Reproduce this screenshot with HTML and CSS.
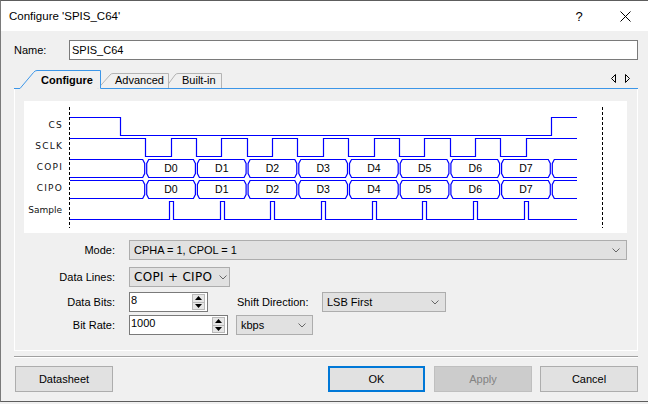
FILE: index.html
```html
<!DOCTYPE html>
<html>
<head>
<meta charset="utf-8">
<link rel="stylesheet" href="styles.css">
</head>
<body>
<div class="window">
  <div class="titlebar">
    <span class="title">Configure 'SPIS_C64'</span>
    <span class="capbtn help">?</span>
    <span class="capbtn close"><svg width="11" height="11" viewBox="0 0 11 11"><path d="M0.5,0.5 L10.5,10.5 M10.5,0.5 L0.5,10.5" stroke="#000" stroke-width="1"/></svg></span>
  </div>
  <div class="content">
    <div class="namerow">
      <label class="namelbl">Name:</label>
      <div class="nameinput">SPIS_C64</div>
    </div>
    <div class="tabs">
      <svg class="tabshapes" width="624" height="19" viewBox="0 0 624 19">
        <path d="M151,18.5 L161,5 Q162,3.5 164,3.5 H207.5 V18.5" fill="#f0f0f0" stroke="#b4b4b4"/>
        <path d="M84,18.5 L96,5 Q97,3.5 99,3.5 H154.5 V18.5" fill="#f0f0f0" stroke="#b4b4b4"/>
        <path d="M0,18.5 H6 M86.5,18.5 H624" stroke="#3c96e8"/>
        <path d="M6,18.5 L19.5,2.5 Q21,0.5 23,0.5 H86.5 V18.5" fill="#f0f0f0" stroke="#3c96e8"/>
        <path d="M601.5,4.5 L597.5,8.5 L601.5,12.5 Z M611.5,4.5 L615.5,8.5 L611.5,12.5 Z" fill="none" stroke="#000"/>
      </svg>
      <div class="tablabels">
        <span class="tab tab-configure">Configure</span>
        <span class="tab tab-advanced">Advanced</span>
        <span class="tab tab-builtin">Built-in</span>
      </div>
    </div>
    <div class="panel">
      <svg class="wave" width="603" height="132" viewBox="0 0 603 132">
        <g class="sig-labels">
          <text x="39" y="26.5" class="spaced">CS</text>
          <text x="39" y="48" class="spaced">SCLK</text>
          <text x="39" y="69" class="spaced">COPI</text>
          <text x="39" y="90" class="spaced">CIPO</text>
          <text x="38" y="111.5">Sample</text>
        </g>
        <path d="M45.5,6 V127 M578.5,6 V127" stroke="#000" stroke-dasharray="3 2" fill="none"/>
        <g fill="none" stroke="#0000ff" stroke-width="1.2">
          <path d="M46,16.5 H96.5 V34.5 H527.5 V16.5 H553"/>
          <path d="M46,37.5 H121.5 V55.5 H147.5 V37.5 H172.5 V55.5 H197.5 V37.5 H223.5 V55.5 H248.5 V37.5 H273.5 V55.5 H299.5 V37.5 H324.5 V55.5 H350.5 V37.5 H375.5 V55.5 H400.5 V37.5 H426.5 V55.5 H451.5 V37.5 H476.5 V55.5 H502.5 V37.5 H553"/>
          <g id="bus">
            <path d="M46,58.5 H118.7 L120.7,62.5 V72.5 L118.7,76.5 H46"/>
            <path d="M124.7,58.5 H169.4 L171.4,62.5 V72.5 L169.4,76.5 H124.7 L122.7,72.5 V62.5 Z"/>
            <path d="M175.4,58.5 H220.1 L222.1,62.5 V72.5 L220.1,76.5 H175.4 L173.4,72.5 V62.5 Z"/>
            <path d="M226.1,58.5 H270.8 L272.8,62.5 V72.5 L270.8,76.5 H226.1 L224.1,72.5 V62.5 Z"/>
            <path d="M276.8,58.5 H321.5 L323.5,62.5 V72.5 L321.5,76.5 H276.8 L274.8,72.5 V62.5 Z"/>
            <path d="M327.5,58.5 H372.2 L374.2,62.5 V72.5 L372.2,76.5 H327.5 L325.5,72.5 V62.5 Z"/>
            <path d="M378.2,58.5 H422.9 L424.9,62.5 V72.5 L422.9,76.5 H378.2 L376.2,72.5 V62.5 Z"/>
            <path d="M428.9,58.5 H473.6 L475.6,62.5 V72.5 L473.6,76.5 H428.9 L426.9,72.5 V62.5 Z"/>
            <path d="M479.6,58.5 H524.3 L526.3,62.5 V72.5 L524.3,76.5 H479.6 L477.6,72.5 V62.5 Z"/>
            <path d="M553,58.5 H530.3 L528.3,62.5 V72.5 L530.3,76.5 H553"/>
          </g>
          <use href="#bus" y="21"/>
          <path d="M46,118.5 H145.5 V100.5 H149.5 V118.5 H196.5 V100.5 H200.5 V118.5 H246.5 V100.5 H250.5 V118.5 H297.5 V100.5 H301.5 V118.5 H348.5 V100.5 H352.5 V118.5 H398.5 V100.5 H402.5 V118.5 H449.5 V100.5 H453.5 V118.5 H500.5 V100.5 H504.5 V118.5 H553"/>
        </g>
        <g class="cell-labels">
          <text x="147" y="71">D0</text>
          <text x="197.8" y="71">D1</text>
          <text x="248.5" y="71">D2</text>
          <text x="299.2" y="71">D3</text>
          <text x="349.9" y="71">D4</text>
          <text x="400.6" y="71">D5</text>
          <text x="451.3" y="71">D6</text>
          <text x="502" y="71">D7</text>
          <text x="147" y="92">D0</text>
          <text x="197.8" y="92">D1</text>
          <text x="248.5" y="92">D2</text>
          <text x="299.2" y="92">D3</text>
          <text x="349.9" y="92">D4</text>
          <text x="400.6" y="92">D5</text>
          <text x="451.3" y="92">D6</text>
          <text x="502" y="92">D7</text>
        </g>
      </svg>
      <div class="form">
        <div class="row r-mode">
          <label class="lbl">Mode:</label>
          <div class="combo combo-mode"><span>CPHA = 1, CPOL = 1</span><svg class="chev" width="8" height="5" viewBox="0 0 8 5"><polyline points="0.5,0.5 4,4 7.5,0.5" fill="none" stroke="#666"/></svg></div>
        </div>
        <div class="row r-lines">
          <label class="lbl">Data Lines:</label>
          <div class="combo combo-lines"><span class="big">COPI + CIPO</span><svg class="chev" width="8" height="5" viewBox="0 0 8 5"><polyline points="0.5,0.5 4,4 7.5,0.5" fill="none" stroke="#666"/></svg></div>
        </div>
        <div class="row r-bits">
          <label class="lbl">Data Bits:</label>
          <div class="spin spin-bits"><span class="val">8</span>
            <div class="spinbtns">
              <div class="sb"><svg width="7" height="4" viewBox="0 0 7 4"><path d="M3.5,0 L7,4 L0,4 Z" fill="#000"/></svg></div>
              <div class="sb"><svg width="7" height="4" viewBox="0 0 7 4"><path d="M0,0 L7,0 L3.5,4 Z" fill="#000"/></svg></div>
            </div>
          </div>
          <label class="lbl2">Shift Direction:</label>
          <div class="combo combo-shift"><span>LSB First</span><svg class="chev" width="8" height="5" viewBox="0 0 8 5"><polyline points="0.5,0.5 4,4 7.5,0.5" fill="none" stroke="#666"/></svg></div>
        </div>
        <div class="row r-rate">
          <label class="lbl">Bit Rate:</label>
          <div class="spin spin-rate"><span class="val">1000</span>
            <div class="spinbtns">
              <div class="sb"><svg width="7" height="4" viewBox="0 0 7 4"><path d="M3.5,0 L7,4 L0,4 Z" fill="#000"/></svg></div>
              <div class="sb"><svg width="7" height="4" viewBox="0 0 7 4"><path d="M0,0 L7,0 L3.5,4 Z" fill="#000"/></svg></div>
            </div>
          </div>
          <div class="combo combo-kbps"><span>kbps</span><svg class="chev" width="8" height="5" viewBox="0 0 8 5"><polyline points="0.5,0.5 4,4 7.5,0.5" fill="none" stroke="#666"/></svg></div>
        </div>
      </div>
    </div>
    <div class="sep"></div>
    <div class="btnrow">
      <div class="btn btn-datasheet">Datasheet</div>
      <div class="spacer"></div>
      <div class="btn btn-ok">OK</div>
      <div class="btn btn-apply">Apply</div>
      <div class="btn btn-cancel">Cancel</div>
    </div>
  </div>
</div>
</body>
</html>
```

FILE: styles.css
```css
* { box-sizing: border-box; }
html, body { margin: 0; padding: 0; }
body {
  width: 648px;
  height: 404px;
  overflow: hidden;
  background: #f0f0f0;
  font-family: "Liberation Sans", Arial, sans-serif;
  font-size: 11px;
  color: #000;
}
.window {
  width: 648px;
  height: 402px;
  border-left: 1px solid #7a7a7a;
  border-top: 1px solid #5d5d5d;
  border-bottom: 1px solid #5d5d5d;
  background: #f0f0f0;
  display: flex;
  flex-direction: column;
}
.titlebar {
  height: 30px;
  flex: none;
  background: #fff;
  display: flex;
  align-items: center;
  padding-left: 8px;
}
.title { flex: 1; font-size: 11.5px; }
.capbtn {
  width: 46px;
  height: 30px;
  display: flex;
  align-items: center;
  justify-content: center;
}
.help { font-size: 13px; }
.content {
  flex: 1;
  padding: 9px 10px 0 13px;
  display: flex;
  flex-direction: column;
}
.namerow { display: flex; align-items: center; height: 20px; }
.namelbl { width: 55px; }
.nameinput {
  flex: 1;
  height: 20px;
  border: 1px solid #7a7a7a;
  background: #fff;
  padding-left: 2px;
  line-height: 18px;
}
.tabs { position: relative; height: 19px; margin-top: 10px; }
.tabshapes { position: absolute; left: 0; top: 0; }
.tablabels {
  position: relative;
  display: flex;
  padding-left: 27px;
  padding-top: 4px;
  line-height: 13px;
}
.tab-configure { width: 74px; font-weight: bold; }
.tab-advanced { width: 67px; }
.panel {
  height: 262px;
  border: 1px solid #fff;
  border-top: none;
  padding: 12px 10px 0 9px;
}
.wave { display: block; background: #fff; }
.sig-labels text {
  font-family: "DejaVu Sans", sans-serif;
  font-size: 9px;
  text-anchor: end;
  fill: #111;
}
.sig-labels text.spaced { letter-spacing: 1.2px; }
.cell-labels text {
  font-family: "Liberation Sans", Arial, sans-serif;
  font-size: 10.5px;
  text-anchor: middle;
  fill: #000;
}
.row { display: flex; align-items: center; height: 20px; }
.r-mode { margin-top: 7px; }
.r-lines { margin-top: 7px; }
.r-bits { margin-top: 5px; }
.r-rate { margin-top: 3px; }
.lbl { width: 91px; text-align: right; margin-right: 14px; }
.combo {
  height: 20px;
  background: #e1e1e1;
  border: 1px solid #adadad;
  display: flex;
  align-items: center;
  justify-content: space-between;
  padding: 0 6px 0 4px;
}
.combo-mode { flex: 1; }
.combo-lines { width: 101px; padding-right: 2px; }
.big { font-family: "DejaVu Sans", sans-serif; font-size: 12px; letter-spacing: 0.3px; }
.combo-shift { width: 124px; }
.combo-kbps { width: 77px; margin-left: 8px; }
.spin {
  height: 20px;
  background: #fff;
  border: 1px solid #7a7a7a;
  display: flex;
  align-items: flex-start;
  justify-content: space-between;
}
.spin .val { padding-left: 1px; line-height: 14px; }
.spin-bits { width: 79px; }
.spin-rate { width: 99px; }
.spinbtns {
  width: 13px;
  height: 16px;
  margin: 1px 2px 0 0;
  display: flex;
  flex-direction: column;
  border: 1px solid #b9b9b9;
  background: #e6e6e6;
}
.sb { flex: 1; display: flex; align-items: center; justify-content: center; }
.sb + .sb { border-top: 1px solid #b9b9b9; }
.lbl2 { margin-left: 29px; width: 85px; }
.sep {
  height: 2px;
  margin-top: 5px;
  border-top: 1px solid #a0a0a0;
  border-bottom: 1px solid #fff;
}
.btnrow { display: flex; height: 26px; margin-top: 8px; }
.spacer { flex: 1; }
.btn {
  height: 26px;
  width: 98px;
  border: 1px solid #adadad;
  background: #e1e1e1;
  display: flex;
  align-items: center;
  justify-content: center;
}
.btn-datasheet { margin-left: 1px; }
.btn-ok { width: 97px; border: 2px solid #0078d7; }
.btn-apply { margin-left: 9px; background: #cccccc; border-color: #bfbfbf; color: #838383; }
.btn-cancel { margin-left: 8px; }
```
